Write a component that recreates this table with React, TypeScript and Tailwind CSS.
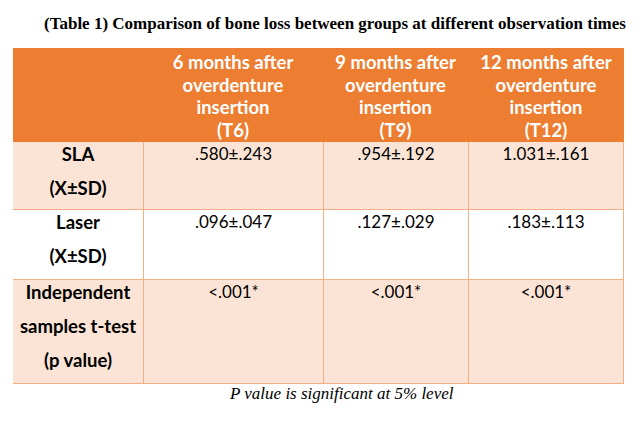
import React from "react";

const HEAD = ["6 months after", "9 months after", "12 months after"];
const TAGS = ["(T6)", "(T9)", "(T12)"];
const W = ["w-[180px]", "w-[145px]", "w-[156px]"];

const ROWS = [
  { label: ["SLA", "(X±SD)"], vals: [".580±.243", ".954±.192", "1.031±.161"], fill: true, h: "h-[68px]" },
  { label: ["Laser", "(X±SD)"], vals: [".096±.047", ".127±.029", ".183±.113"], fill: false, h: "h-[70px]" },
  {
    label: ["Independent", "samples t-test", "(p value)"],
    vals: ["<.001*", "<.001*", "<.001*"],
    fill: true,
    h: "h-[104px]",
  },
];

export default function App() {
  return (
    <div className="w-[642px] h-[423px] bg-white text-black overflow-hidden">
      <div className="pt-[14px] pl-[44px] leading-[20px] text-[17px] font-bold font-['Liberation_Serif',serif] whitespace-nowrap">
        (Table 1) Comparison of bone loss between groups at different observation times
      </div>

      <div className="ml-[13px] mt-[14px] w-[611px] font-['Lato',sans-serif] text-[17px]">
        <div className="flex h-[94px] bg-[#ed7d31] text-white font-bold text-[18.5px] leading-[22.5px] text-center">
          <div className="w-[130px]" />
          {HEAD.map((h, i) => (
            <div key={i} className={`${W[i]} pt-[3px] whitespace-nowrap`}>
              <div>{h}</div>
              <div>overdenture</div>
              <div>insertion</div>
              <div>{TAGS[i]}</div>
            </div>
          ))}
        </div>

        {ROWS.map((r, ri) => (
          <div key={ri} className={`flex ${r.h} border-b border-[#f4b083] ${r.fill ? "bg-[#fbe4d5]" : "bg-white"} leading-[34px] text-center`}>
            <div className="w-[130px] font-bold text-[18.5px] whitespace-nowrap">
              <div className="-mt-[5px]">
                {r.label.map((l) => (
                  <div key={l}>{l}</div>
                ))}
              </div>
            </div>
            {r.vals.map((v, i) => (
              <div key={i} className={`${W[i]} border-l border-[#f4b083] ${i === 2 ? "border-r" : ""}`}>
                <div className="-mt-[5px]">{v}</div>
              </div>
            ))}
          </div>
        ))}
      </div>

      <div className="pl-[230px] leading-[20px] text-[17px] italic font-['Liberation_Serif',serif]">
        P value is significant at 5% level
      </div>
    </div>
  );
}
